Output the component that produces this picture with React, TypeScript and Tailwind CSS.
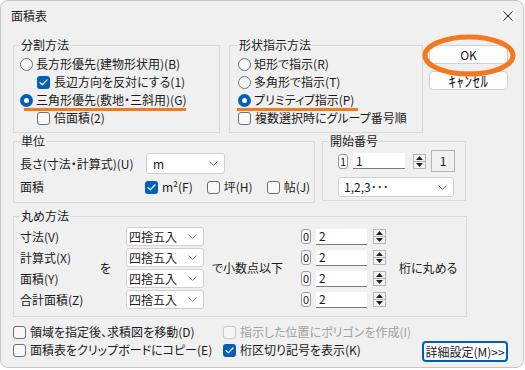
import * as React from "react";

function CheckMark(): React.ReactElement {
  return (
    <svg width="9" height="7" viewBox="0 0 9 7" fill="none">
      <path d="M1 3.6 L3.3 5.8 L8 1" stroke="white" strokeWidth="1.3" strokeLinecap="round" strokeLinejoin="round" />
    </svg>
  );
}

function CheckRow({
  label,
  checked = false,
  disabled = false,
  className = "",
}: {
  label: string;
  checked?: boolean;
  disabled?: boolean;
  className?: string;
}): React.ReactElement {
  let box: React.ReactElement;
  if (checked) {
    box = (
      <span className="flex h-[13px] w-[13px] shrink-0 items-center justify-center rounded-[3px] bg-[#005fb8]">
        <CheckMark />
      </span>
    );
  } else if (disabled) {
    box = <span className="h-[13px] w-[13px] shrink-0 rounded-[3px] border border-[#c9c9c9] bg-[#f6f6f6]" />;
  } else {
    box = <span className="h-[13px] w-[13px] shrink-0 rounded-[3px] border border-[#6f6f6f] bg-[#f8f8f8]" />;
  }
  return (
    <div className={`flex h-[18px] items-center gap-[4px] ${className}`}>
      {box}
      <span className={disabled ? "whitespace-nowrap text-[#a0a0a0]" : "whitespace-nowrap"}>{label}</span>
    </div>
  );
}

function RadioRow({ label, checked = false }: { label: string; checked?: boolean }): React.ReactElement {
  return (
    <div className="flex h-[18px] items-center gap-[3px]">
      {checked ? (
        <span className="flex h-[13px] w-[13px] shrink-0 items-center justify-center rounded-full bg-[#005fb8]">
          <span className="h-[5px] w-[5px] rounded-full bg-white" />
        </span>
      ) : (
        <span className="h-[13px] w-[13px] shrink-0 rounded-full border border-[#6f6f6f] bg-[#f8f8f8]" />
      )}
      <span className="whitespace-nowrap">{label}</span>
    </div>
  );
}

function Chevron({ light = false }: { light?: boolean }): React.ReactElement {
  return (
    <svg width="9" height="5" viewBox="0 0 9 5" fill="none">
      <path d="M0.5 0.5 L4.5 4.5 L8.5 0.5" stroke={light ? "#8c8c8c" : "#5f5f5f"} strokeWidth="1" />
    </svg>
  );
}

function Select({ value, className = "", light = false }: { value: string; className?: string; light?: boolean }): React.ReactElement {
  return (
    <div
      className={`flex items-center justify-between rounded-[3px] border border-[#d0d0d0] bg-white pr-[6px] ${className}`}
    >
      <span className="whitespace-nowrap">{value}</span>
      <Chevron light={light} />
    </div>
  );
}

function Badge({ value }: { value: string }): React.ReactElement {
  return (
    <span className="flex h-[15px] w-[10px] shrink-0 items-center justify-center rounded-[3px] border border-[#9a9a9a] bg-white text-[11px] leading-[13px]">
      {value}
    </span>
  );
}

function Spinner(): React.ReactElement {
  return (
    <div className="flex h-[15px] w-[13px] shrink-0 flex-col border border-[#b4b4b4] bg-[#f3f3f3]">
      <div className="flex flex-1 items-center justify-center border-b border-[#b4b4b4]">
        <svg width="7" height="4" viewBox="0 0 7 4">
          <path d="M0 4 L3.5 0 L7 4 Z" fill="#222" />
        </svg>
      </div>
      <div className="flex flex-1 items-center justify-center">
        <svg width="7" height="4" viewBox="0 0 7 4">
          <path d="M0 0 L3.5 4 L7 0 Z" fill="#222" />
        </svg>
      </div>
    </div>
  );
}

function NumInput({ value, className = "" }: { value: string; className?: string }): React.ReactElement {
  return (
    <div className={`flex h-[16px] shrink-0 items-center border-b border-[#7a7a7a] bg-white pl-[3px] ${className}`}>
      {value}
    </div>
  );
}

function GroupBox({
  title,
  className = "",
  children,
}: {
  title: string;
  className?: string;
  children: React.ReactNode;
}): React.ReactElement {
  return (
    <fieldset className={`shrink-0 border border-[#d9d9d9] ${className}`}>
      <legend className="px-[1px]">{title}</legend>
      {children}
    </fieldset>
  );
}

const roundRows = ["寸法(V)", "計算式(X)", "面積(Y)", "合計面積(Z)"];

export default function App(): React.ReactElement {
  return (
    <div className="h-[370px] w-[525px] bg-white font-['Noto_Sans_CJK_JP',sans-serif] text-[12px] leading-[16px] text-[#1a1a1a] [font-feature-settings:'palt']">
      <div className="flex h-[368px] w-[524px] flex-col overflow-hidden rounded-[8px] border border-[#c6c6c6] bg-[#f0f0f0]">
        <div className="flex h-[29px] shrink-0 items-center justify-between pl-[10px] pr-[10px]">
          <span className="pt-[1px]">面積表</span>
          <svg width="10" height="10" viewBox="0 0 10 10" className="mt-[1px]">
            <path d="M0.5 0.5 L9.5 9.5 M9.5 0.5 L0.5 9.5" stroke="#222" strokeWidth="1" />
          </svg>
        </div>

        <div className="flex flex-col pl-[12px]">
          <div className="mt-[7px] flex items-start">
            <GroupBox title="分割方法" className="h-[96px] w-[207px] pl-[6px]">
              <div className="flex flex-col pt-[2px]">
                <RadioRow label="長方形優先(建物形状用)(B)" />
                <CheckRow className="ml-[17px]" checked label="長辺方向を反対にする(1)" />
                <div className="relative">
                  <RadioRow checked label="三角形優先(敷地・三斜用)(G)" />
                  <div className="absolute left-[4px] top-[17px] h-[3px] w-[162px] bg-[#f5781e]" />
                </div>
                <CheckRow className="ml-[17px]" label="倍面積(2)" />
              </div>
            </GroupBox>

            <GroupBox title="形状指示方法" className="ml-[9px] h-[96px] w-[194px] pl-[8px]">
              <div className="flex flex-col pt-[2px]">
                <RadioRow label="矩形で指示(R)" />
                <RadioRow label="多角形で指示(T)" />
                <div className="relative">
                  <RadioRow checked label="プリミティブ指示(P)" />
                  <div className="absolute left-[-1px] top-[17px] h-[3px] w-[121px] bg-[#f5781e]" />
                </div>
                <CheckRow label="複数選択時にグループ番号順" />
              </div>
            </GroupBox>

            <div className="ml-[6px] flex w-[79px] flex-col">
              <div className="relative mt-[8px]">
                <button
                  type="button"
                  className="flex h-[19px] w-[79px] items-center justify-center rounded-[4px] border border-[#d0d0d0] bg-[#fdfdfd]"
                >
                  OK
                </button>
                <svg
                  width="94"
                  height="43"
                  viewBox="0 0 94 43"
                  className="pointer-events-none absolute left-[-7px] top-[-11px]"
                >
                  <ellipse cx="47" cy="21.5" rx="44" ry="18.5" fill="none" stroke="#f5781e" strokeWidth="5" />
                </svg>
              </div>
              <button
                type="button"
                className="mt-[7px] flex h-[19px] w-[79px] items-center justify-center rounded-[4px] border border-[#d0d0d0] bg-[#fdfdfd] text-[15px] leading-[16px] tracking-[0.5px]"
              >
                ｷｬﾝｾﾙ
              </button>
            </div>
          </div>

          <div className="flex items-start">
            <GroupBox title="単位" className="h-[70px] w-[302px] pl-[6px]">
              <div className="flex flex-col">
                <div className="mt-[4px] flex h-[21px] items-center">
                  <span className="w-[126px] whitespace-nowrap">長さ(寸法・計算式)(U)</span>
                  <Select value="m" className="h-[21px] w-[79px] pl-[6px]" />
                </div>
                <div className="mt-[4px] flex h-[18px] items-center">
                  <span className="w-[125px]">面積</span>
                  <CheckRow checked label="m²(F)" />
                  <CheckRow className="ml-[14px]" label="坪(H)" />
                  <CheckRow className="ml-[14px]" label="帖(J)" />
                </div>
              </div>
            </GroupBox>

            <GroupBox title="開始番号" className="ml-[7px] h-[68px] w-[144px] pl-[6px]">
              <div className="ml-[9px] flex flex-col">
                <div className="mt-[1px] flex h-[22px] items-center">
                  <Badge value="1" />
                  <NumInput value="1" className="ml-[5px] w-[52px]" />
                  <div className="ml-[8px]">
                    <Spinner />
                  </div>
                  <div className="ml-[5px] flex h-[22px] w-[24px] items-center justify-center border border-[#b4b4b4]">
                    1
                  </div>
                </div>
                <Select value="1,2,3･･･" className="mt-[5px] h-[20px] w-[116px] pl-[5px]" />
              </div>
            </GroupBox>
          </div>

          <GroupBox title="丸め方法" className="mt-[5px] h-[109px] w-[454px] pl-[6px]">
            <div className="flex pt-[3px]">
              <div className="flex w-[80px] flex-col gap-[2px]">
                {roundRows.map((label) => (
                  <div key={label} className="flex h-[19px] items-center whitespace-nowrap">
                    {label}
                  </div>
                ))}
              </div>
              <div className="flex w-[26px] items-center">を</div>
              <div className="flex w-[78px] flex-col gap-[2px]">
                {roundRows.map((label) => (
                  <Select key={label} value="四捨五入" light className="h-[19px] w-[78px] rounded-[2px] pl-[2px]" />
                ))}
              </div>
              <div className="ml-[8px] flex w-[89px] items-center whitespace-nowrap">で小数点以下</div>
              <div className="flex flex-col gap-[2px]">
                {roundRows.map((label) => (
                  <div key={label} className="flex h-[19px] items-center">
                    <Badge value="0" />
                    <NumInput value="2" className="ml-[5px] w-[51px]" />
                    <div className="ml-[6px]">
                      <Spinner />
                    </div>
                  </div>
                ))}
              </div>
              <div className="ml-[13px] flex items-center whitespace-nowrap">桁に丸める</div>
            </div>
          </GroupBox>

          <div className="mt-[6px] flex items-start">
            <div className="flex w-[210px] flex-col">
              <CheckRow label="領域を指定後、求積図を移動(D)" />
              <CheckRow label="面積表をクリップボードにコピー(E)" />
            </div>
            <div className="flex w-[199px] flex-col">
              <CheckRow disabled label="指示した位置にポリゴンを作成(I)" />
              <CheckRow checked label="桁区切り記号を表示(K)" />
            </div>
            <button
              type="button"
              className="mt-[18px] flex h-[21px] w-[86px] items-center justify-center whitespace-nowrap rounded-[4px] border-2 border-[#005fb8] bg-white"
            >
              詳細設定(M)&gt;&gt;
            </button>
          </div>
        </div>
      </div>
    </div>
  );
}
